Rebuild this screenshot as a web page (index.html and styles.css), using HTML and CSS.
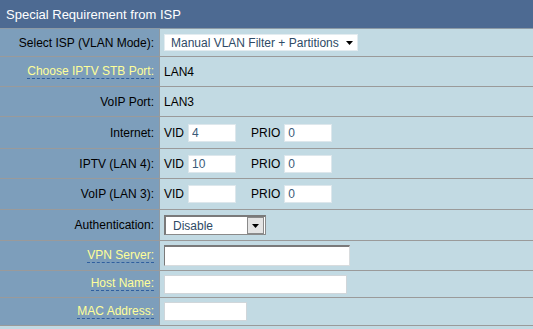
FILE: index.html
```html
<!DOCTYPE html>
<html lang="en">
<head>
  <meta charset="UTF-8" />
  <title>Special Requirement from ISP</title>
  <link rel="stylesheet" href="styles.css">
</head>
<body>

<div class="isp-panel">
  <div class="panel-head">Special Requirement from ISP</div>

  <div class="row r1">
    <div class="label">Select ISP (VLAN Mode):</div>
    <div class="value">
      <div class="select isp-select">
        <span>Manual VLAN Filter + Partitions</span>
        <svg class="caret" width="7" height="4" viewBox="0 0 7 4"><path d="M0 0h7L3.5 4z" fill="#000"/></svg>
      </div>
    </div>
  </div>

  <div class="row r2">
    <div class="label"><span class="hint">Choose IPTV STB Port:</span></div>
    <div class="value">LAN4</div>
  </div>

  <div class="row r3">
    <div class="label">VoIP Port:</div>
    <div class="value">LAN3</div>
  </div>

  <div class="row r4">
    <div class="label">Internet:</div>
    <div class="value">
      <span>VID</span><input class="num" type="text" value="4">
      <span class="prio">PRIO</span><input class="num" type="text" value="0">
    </div>
  </div>

  <div class="row r5">
    <div class="label">IPTV (LAN 4):</div>
    <div class="value">
      <span>VID</span><input class="num" type="text" value="10">
      <span class="prio">PRIO</span><input class="num" type="text" value="0">
    </div>
  </div>

  <div class="row r6">
    <div class="label">VoIP (LAN 3):</div>
    <div class="value">
      <span>VID</span><input class="num" type="text" value="">
      <span class="prio">PRIO</span><input class="num" type="text" value="0">
    </div>
  </div>

  <div class="row r7">
    <div class="label">Authentication:</div>
    <div class="value">
      <div class="select auth-select">
        <span>Disable</span>
        <span class="drop-btn">
          <svg width="7" height="4" viewBox="0 0 7 4"><path d="M0 0h7L3.5 4z" fill="#000"/></svg>
        </span>
      </div>
    </div>
  </div>

  <div class="row r8">
    <div class="label"><span class="hint">VPN Server:</span></div>
    <div class="value"><input class="text vpn" type="text"></div>
  </div>

  <div class="row r9">
    <div class="label"><span class="hint">Host Name:</span></div>
    <div class="value"><input class="text host" type="text"></div>
  </div>

  <div class="row r10">
    <div class="label"><span class="hint">MAC Address:</span></div>
    <div class="value"><input class="text mac" type="text"></div>
  </div>
</div>

</body>
</html>
```

FILE: styles.css
```css
body {
  margin: 0;
  font-family: "Liberation Sans", Arial, sans-serif;
  font-size: 12px;
  background: #c2dae3;
}

.isp-panel {
  width: 533px;
  height: 329px;
  background: #c2dae3;
}

.panel-head {
  height: 28px;
  padding-left: 6px;
  display: flex;
  align-items: center;
  background: #4d6a92;
  color: #fff;
  font-size: 13px;
  border-bottom: 1px solid #8d9aa5;
}

.row {
  display: grid;
  grid-template-columns: 160px 1fr;
  box-sizing: border-box;
  border-bottom: 1px solid #9a9a9a;
}

.r1 { height: 28px; }
.r2 { height: 30px; }
.r3 { height: 30px; }
.r4 { height: 32px; }
.r5 { height: 30px; }
.r6 { height: 31px; }
.r7 { height: 31px; }
.r8 { height: 30px; }
.r9 { height: 27px; }
.r10 { height: 28px; }

.label {
  display: flex;
  align-items: center;
  justify-content: flex-end;
  padding-right: 5px;
  background: #7d9ebb;
  border-right: 1px solid #8f9aa3;
  color: #000;
}

.hint {
  color: #ffff99;
  border-bottom: 1px dashed #2f5f9f;
  line-height: 13px;
}

.value {
  display: flex;
  align-items: center;
  padding-left: 4px;
  color: #000;
}

.select {
  display: flex;
  align-items: center;
  box-sizing: border-box;
  background: #fff;
  color: #2e4a66;
}

.isp-select {
  width: 194px;
  height: 17px;
  padding-left: 6px;
  border: 1px solid #e3ecf0;
}

.isp-select span { flex: 1; }

.caret { margin-right: 4px; }

.auth-select {
  width: 102px;
  height: 20px;
  padding-left: 7px;
  border: 1px solid #8a8a8a;
  border-top: 2px solid #7a7a7a;
  border-left: 2px solid #7a7a7a;
}

.auth-select span:first-child { flex: 1; }

.drop-btn {
  width: 15px;
  height: 15px;
  margin-right: 1px;
  display: flex;
  align-items: center;
  justify-content: center;
  background: #e4e4e4;
  border: 1px solid #8a8a8a;
}

input {
  box-sizing: border-box;
  margin: 0;
  background: #fff;
  font-family: "Liberation Sans", Arial, sans-serif;
  font-size: 12px;
  color: #3a5a78;
  outline: none;
}

.num {
  width: 48px;
  height: 18px;
  padding: 0 3px;
  margin-left: 4px;
  border: 1px solid #dde7ec;
}

.prio { margin-left: 15px; }

.text {
  height: 19px;
  border: 1px solid #d0d6da;
}

.vpn {
  width: 186px;
  height: 21px;
  border: 1px solid #d8dcde;
  border-top: 2px solid #7a7a7a;
  border-left: 1px solid #7a7a7a;
}

.host { width: 183px; }

.mac { width: 83px; }
```
